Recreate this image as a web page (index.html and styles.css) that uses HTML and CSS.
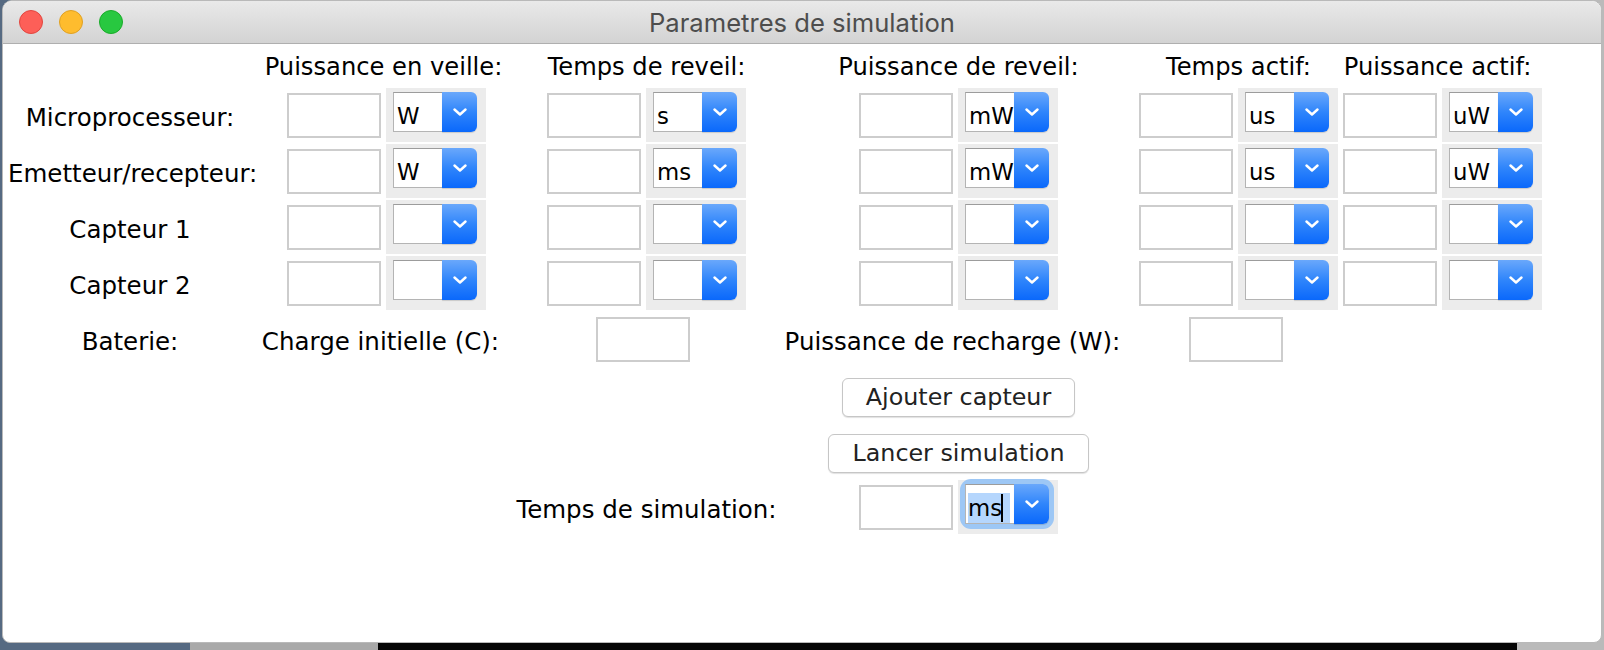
FILE: index.html
```html
<!DOCTYPE html>
<html lang="fr">
<head>
<meta charset="utf-8">
<title>Parametres de simulation</title>
<link rel="stylesheet" href="styles.css">
</head>
<body>
<div class="window">
  <div class="titlebar">
    <div class="lights">
      <span class="light red"></span>
      <span class="light yellow"></span>
      <span class="light green"></span>
    </div>
    <div class="title">Parametres de simulation</div>
  </div>
  <div class="form">
    <div class="row hdr-row">
      <div class="f1 hdr shift-l2">Puissance en veille:</div>
      <div class="f2 hdr">Temps de reveil:</div>
      <div class="f3 hdr">Puissance de reveil:</div>
      <div class="f4 hdr">Temps actif:</div>
      <div class="f5 hdr shift-l4">Puissance actif:</div>
    </div>

    <div class="row">
      <div class="c1 lbl">Microprocesseur:</div>
      <div class="f1 field"><span class="tf"></span><span class="cpanel"><span class="combo"><span class="val">W</span><span class="arrow"><svg viewBox="0 0 14 8" width="14" height="8"><polyline points="1.5,1.5 7,6.5 12.5,1.5"/></svg></span></span></span></div>
      <div class="f2 field"><span class="tf"></span><span class="cpanel"><span class="combo"><span class="val">s</span><span class="arrow"><svg viewBox="0 0 14 8" width="14" height="8"><polyline points="1.5,1.5 7,6.5 12.5,1.5"/></svg></span></span></span></div>
      <div class="f3 field"><span class="tf"></span><span class="cpanel"><span class="combo"><span class="val">mW</span><span class="arrow"><svg viewBox="0 0 14 8" width="14" height="8"><polyline points="1.5,1.5 7,6.5 12.5,1.5"/></svg></span></span></span></div>
      <div class="f4 field"><span class="tf"></span><span class="cpanel"><span class="combo"><span class="val">us</span><span class="arrow"><svg viewBox="0 0 14 8" width="14" height="8"><polyline points="1.5,1.5 7,6.5 12.5,1.5"/></svg></span></span></span></div>
      <div class="f5 field"><span class="tf"></span><span class="cpanel"><span class="combo"><span class="val">uW</span><span class="arrow"><svg viewBox="0 0 14 8" width="14" height="8"><polyline points="1.5,1.5 7,6.5 12.5,1.5"/></svg></span></span></span></div>
    </div>

    <div class="row">
      <div class="c1 lbl">Emetteur/recepteur:</div>
      <div class="f1 field"><span class="tf"></span><span class="cpanel"><span class="combo"><span class="val">W</span><span class="arrow"><svg viewBox="0 0 14 8" width="14" height="8"><polyline points="1.5,1.5 7,6.5 12.5,1.5"/></svg></span></span></span></div>
      <div class="f2 field"><span class="tf"></span><span class="cpanel"><span class="combo"><span class="val">ms</span><span class="arrow"><svg viewBox="0 0 14 8" width="14" height="8"><polyline points="1.5,1.5 7,6.5 12.5,1.5"/></svg></span></span></span></div>
      <div class="f3 field"><span class="tf"></span><span class="cpanel"><span class="combo"><span class="val">mW</span><span class="arrow"><svg viewBox="0 0 14 8" width="14" height="8"><polyline points="1.5,1.5 7,6.5 12.5,1.5"/></svg></span></span></span></div>
      <div class="f4 field"><span class="tf"></span><span class="cpanel"><span class="combo"><span class="val">us</span><span class="arrow"><svg viewBox="0 0 14 8" width="14" height="8"><polyline points="1.5,1.5 7,6.5 12.5,1.5"/></svg></span></span></span></div>
      <div class="f5 field"><span class="tf"></span><span class="cpanel"><span class="combo"><span class="val">uW</span><span class="arrow"><svg viewBox="0 0 14 8" width="14" height="8"><polyline points="1.5,1.5 7,6.5 12.5,1.5"/></svg></span></span></span></div>
    </div>

    <div class="row">
      <div class="c1 lbl">Capteur 1</div>
      <div class="f1 field"><span class="tf"></span><span class="cpanel"><span class="combo"><span class="val"></span><span class="arrow"><svg viewBox="0 0 14 8" width="14" height="8"><polyline points="1.5,1.5 7,6.5 12.5,1.5"/></svg></span></span></span></div>
      <div class="f2 field"><span class="tf"></span><span class="cpanel"><span class="combo"><span class="val"></span><span class="arrow"><svg viewBox="0 0 14 8" width="14" height="8"><polyline points="1.5,1.5 7,6.5 12.5,1.5"/></svg></span></span></span></div>
      <div class="f3 field"><span class="tf"></span><span class="cpanel"><span class="combo"><span class="val"></span><span class="arrow"><svg viewBox="0 0 14 8" width="14" height="8"><polyline points="1.5,1.5 7,6.5 12.5,1.5"/></svg></span></span></span></div>
      <div class="f4 field"><span class="tf"></span><span class="cpanel"><span class="combo"><span class="val"></span><span class="arrow"><svg viewBox="0 0 14 8" width="14" height="8"><polyline points="1.5,1.5 7,6.5 12.5,1.5"/></svg></span></span></span></div>
      <div class="f5 field"><span class="tf"></span><span class="cpanel"><span class="combo"><span class="val"></span><span class="arrow"><svg viewBox="0 0 14 8" width="14" height="8"><polyline points="1.5,1.5 7,6.5 12.5,1.5"/></svg></span></span></span></div>
    </div>

    <div class="row">
      <div class="c1 lbl">Capteur 2</div>
      <div class="f1 field"><span class="tf"></span><span class="cpanel"><span class="combo"><span class="val"></span><span class="arrow"><svg viewBox="0 0 14 8" width="14" height="8"><polyline points="1.5,1.5 7,6.5 12.5,1.5"/></svg></span></span></span></div>
      <div class="f2 field"><span class="tf"></span><span class="cpanel"><span class="combo"><span class="val"></span><span class="arrow"><svg viewBox="0 0 14 8" width="14" height="8"><polyline points="1.5,1.5 7,6.5 12.5,1.5"/></svg></span></span></span></div>
      <div class="f3 field"><span class="tf"></span><span class="cpanel"><span class="combo"><span class="val"></span><span class="arrow"><svg viewBox="0 0 14 8" width="14" height="8"><polyline points="1.5,1.5 7,6.5 12.5,1.5"/></svg></span></span></span></div>
      <div class="f4 field"><span class="tf"></span><span class="cpanel"><span class="combo"><span class="val"></span><span class="arrow"><svg viewBox="0 0 14 8" width="14" height="8"><polyline points="1.5,1.5 7,6.5 12.5,1.5"/></svg></span></span></span></div>
      <div class="f5 field"><span class="tf"></span><span class="cpanel"><span class="combo"><span class="val"></span><span class="arrow"><svg viewBox="0 0 14 8" width="14" height="8"><polyline points="1.5,1.5 7,6.5 12.5,1.5"/></svg></span></span></span></div>
    </div>

    <div class="row">
      <div class="c1 lbl">Baterie:</div>
      <div class="f1 lbl wide shift-l6">Charge initielle (C):</div>
      <div class="f2 field"><span class="tf tf-bat1"></span></div>
      <div class="f3 lbl wide wide-xl shift-l6">Puissance de recharge (W):</div>
      <div class="f4 field"><span class="tf tf-bat2"></span></div>
    </div>

    <div class="row">
      <div class="f3 btn-cell"><button class="btn">Ajouter capteur</button></div>
    </div>

    <div class="row">
      <div class="f3 btn-cell"><button class="btn">Lancer simulation</button></div>
    </div>

    <div class="row">
      <div class="f2 lbl wide">Temps de simulation:</div>
      <div class="f3 field"><span class="tf"></span><span class="cpanel"><span class="combo focused"><span class="val"><span class="sel">ms</span><span class="caret"></span></span><span class="arrow"><svg viewBox="0 0 14 8" width="14" height="8"><polyline points="1.5,1.5 7,6.5 12.5,1.5"/></svg></span></span></span></div>
    </div>
  </div>
</div>
</body>
</html>
```

FILE: styles.css
```css
html, body {
  margin: 0;
  padding: 0;
}

body {
  width: 1604px;
  height: 650px;
  overflow: hidden;
  background: linear-gradient(to right, #566a82 0 190px, #a9a9a9 190px 378px, #050505 378px 1517px, #bababa 1517px);
  font-family: "DejaVu Sans", "Liberation Sans", sans-serif;
  color: #000;
}

.window {
  margin-left: 2px;
  width: 1600px;
  height: 643px;
  box-sizing: border-box;
  background: #fff;
  border: 1px solid #b9b9b9;
  border-radius: 10px 10px 8px 8px;
  overflow: hidden;
}

.titlebar {
  height: 42px;
  display: flex;
  align-items: center;
  background: linear-gradient(#e9e9e9, #d3d3d3);
  border-bottom: 1px solid #afafaf;
  position: relative;
}

.lights {
  display: flex;
  gap: 16px;
  padding-left: 16px;
}

.light {
  width: 22px;
  height: 22px;
  border-radius: 50%;
  display: block;
}

.red { background: #fd5f58; border: 1px solid #e1463f; }
.yellow { background: #febc2e; border: 1px solid #dfa023; }
.green { background: #28c840; border: 1px solid #1aab29; }

.title {
  position: absolute;
  left: 0;
  right: 0;
  top: 0;
  bottom: 0;
  display: flex;
  align-items: center;
  justify-content: center;
  font-family: "Inter", "Liberation Sans", sans-serif;
  font-size: 25.6px;
  color: #4d4d4d;
  pointer-events: none;
}

.form {
  display: flex;
  flex-direction: column;
  gap: 2px;
  padding: 8px 0 0 5px;
}

.row {
  display: grid;
  grid-template-columns: 244px 35px 199px 61px 199px 113px 199px 81px 199px 5px 199px;
  height: 54px;
  align-items: center;
}

.hdr-row {
  height: 30px;
  margin-bottom: 4px;
}

.c1 { grid-column: 1; }
.f1 { grid-column: 3; }
.f2 { grid-column: 5; }
.f3 { grid-column: 7; }
.f4 { grid-column: 9; }
.f5 { grid-column: 11; }

.hdr {
  font-size: 24.2px;
  line-height: 30px;
  white-space: nowrap;
  text-align: center;
  margin: 0 -40px;
}

.shift-l2 { margin-left: -43px; margin-right: -37px; }
.shift-l4 { margin-left: -45px; margin-right: -35px; }

.lbl {
  font-size: 24.5px;
  line-height: 30px;
  white-space: nowrap;
  text-align: center;
  margin-top: 5px;
}

.wide {
  margin-left: -40px;
  margin-right: -40px;
}

.wide-xl {
  margin-left: -80px;
  margin-right: -80px;
}

.wide.shift-l6 { margin-left: -46px; margin-right: -34px; }
.wide-xl.shift-l6 { margin-left: -86px; margin-right: -74px; }

.field {
  display: flex;
  gap: 5px;
  align-self: stretch;
}

.tf {
  display: block;
  width: 94px;
  height: 45px;
  margin-top: 5px;
  box-sizing: border-box;
  border: 2px solid #cdcdcd;
  background: #fff;
}

.tf-bat1 { margin-left: 49px; }
.tf-bat2 { margin-left: 50px; }

.cpanel {
  display: block;
  width: 100px;
  height: 54px;
  box-sizing: border-box;
  background: #ececec;
  padding: 4px 0 0 7px;
}

.combo {
  display: flex;
  width: 84px;
  height: 40px;
  border-radius: 5px;
}

.val {
  flex: 1;
  display: flex;
  align-items: flex-end;
  box-sizing: border-box;
  background: #fff;
  border: 1px solid #b4b4b4;
  border-top-color: #9c9c9c;
  border-right: none;
  padding: 0 0 1px 3px;
  font-size: 22.8px;
  line-height: 28px;
  white-space: nowrap;
  overflow: hidden;
  min-width: 0;
}

.arrow {
  width: 35px;
  flex: none;
  display: flex;
  align-items: center;
  justify-content: center;
  border-radius: 0 6px 6px 0;
  background: linear-gradient(#6aa8fb, #2f85fb 50%, #0a68fb);
  box-shadow: 0 1px 1px rgba(0, 0, 0, 0.15);
}

.arrow svg polyline {
  fill: none;
  stroke: #fff;
  stroke-width: 2.4;
  stroke-linecap: round;
  stroke-linejoin: round;
}

.focused {
  box-shadow: 0 0 0 5px #9dc7f5;
  border-radius: 6px;
}

.focused .val {
  padding: 0 0 0 2px;
}

.sel {
  background: #b5d6fd;
  line-height: 30px;
  padding-right: 8px;
}

.caret {
  display: block;
  width: 2px;
  height: 28px;
  background: #000;
  margin-left: -9px;
  margin-bottom: 1px;
}

.btn-cell {
  display: flex;
  justify-content: center;
  margin: 0 -40px;
}

.btn {
  font-family: "DejaVu Sans", "Liberation Sans", sans-serif;
  font-size: 23.8px;
  color: #222;
  background: #fff;
  border: 1px solid #c6c6c6;
  border-radius: 6px;
  box-shadow: 0 1px 1px rgba(0, 0, 0, 0.12);
  height: 39px;
  padding: 0 23px;
  margin-top: 4px;
  line-height: 36px;
}
```
